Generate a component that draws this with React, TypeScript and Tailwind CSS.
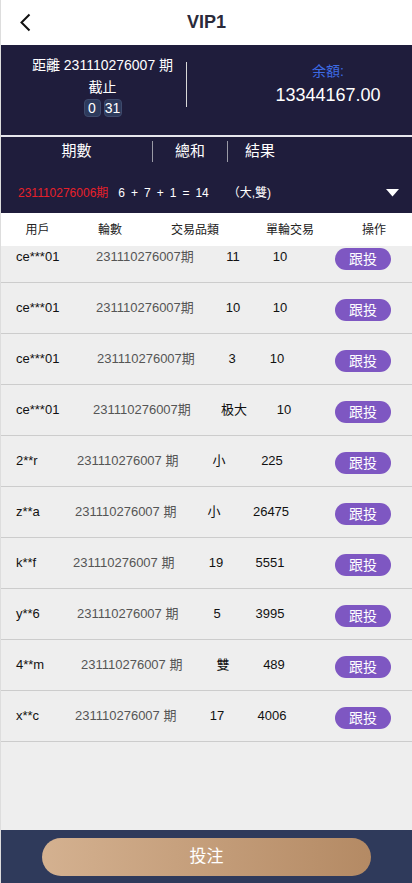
import { type FC } from "react";

type Row = {
  user: string;
  period: string;
  value: string;
  amount: string;
  p: number;
  c1: number;
  c2: number;
};

const rows: Row[] = [
  { user: "ce***01", period: "231110276007期", value: "11", amount: "10", p: 96, c1: 233, c2: 280 },
  { user: "ce***01", period: "231110276007期", value: "10", amount: "10", p: 96, c1: 233, c2: 280 },
  { user: "ce***01", period: "231110276007期", value: "3", amount: "10", p: 97, c1: 232, c2: 277 },
  { user: "ce***01", period: "231110276007期", value: "极大", amount: "10", p: 93, c1: 234, c2: 284 },
  { user: "2**r", period: "231110276007 期", value: "小", amount: "225", p: 77, c1: 219, c2: 272 },
  { user: "z**a", period: "231110276007 期", value: "小", amount: "26475", p: 75, c1: 214, c2: 271 },
  { user: "k**f", period: "231110276007 期", value: "19", amount: "5551", p: 73, c1: 216, c2: 270 },
  { user: "y**6", period: "231110276007 期", value: "5", amount: "3995", p: 77, c1: 217, c2: 270 },
  { user: "4**m", period: "231110276007 期", value: "雙", amount: "489", p: 81, c1: 223, c2: 274 },
  { user: "x**c", period: "231110276007 期", value: "17", amount: "4006", p: 75, c1: 217, c2: 272 },
];

const font = {
  fontFamily: '"Liberation Sans", "Noto Sans CJK TC", sans-serif',
};

const BetRow: FC<{ row: Row }> = ({ row }) => {
  // widths come from each row's own data
  return (
    <div className="flex h-[51px] shrink-0 items-center border-b border-[#cccccc] text-[13px] text-[#111]">
      <div className="pl-[15px]" style={{ width: row.p - 1 }}>
        {row.user}
      </div>
      <div className="text-[#555]" style={{ width: row.c1 - 20 - row.p }}>
        {row.period}
      </div>
      <div className="w-[40px] text-center">{row.value}</div>
      <div className="text-center" style={{ width: 2 * (row.c2 - (row.c1 + 20)) }}>
        {row.amount}
      </div>
      <button
        type="button"
        className="ml-auto mr-[21px] mt-[3px] h-[22px] w-[56px] rounded-full bg-[#7e57c2] text-[14px] leading-[22px] text-white"
      >
        跟投
      </button>
    </div>
  );
};

export default function App() {
  return (
    <div
      style={font}
      className="flex h-[883px] w-[412px] flex-col overflow-hidden border-l border-[#dddddd] bg-[#eeeeee]"
    >
      {/* header */}
      <div className="grid h-[45px] shrink-0 grid-cols-[1fr_auto_1fr] items-center bg-white">
        <div className="pl-[18px]">
          <svg width="12" height="19" viewBox="0 0 12 19" fill="none">
            <path d="M10.5 1.5L2.5 9.5L10.5 17.5" stroke="#111" strokeWidth="2" />
          </svg>
        </div>
        <div className="text-[18px] font-bold text-[#2a2a3a]">VIP1</div>
        <div />
      </div>

      {/* countdown / balance */}
      <div className="flex h-[90px] shrink-0 bg-[#1f1d3c] text-white">
        <div className="flex w-[185px] flex-col items-center pl-[18px] pt-[9px]">
          <div className="text-[14px] leading-[22px]">距離 231110276007 期</div>
          <div className="text-[14px] leading-[22px]">截止</div>
          <div className="mt-[1px] flex gap-[3px]">
            <span className="flex h-[18px] w-[17px] items-center justify-center rounded-[4px] border border-[#3e4a6c] bg-[#2d3a5c] text-[14px]">
              0
            </span>
            <span className="flex h-[18px] w-[18px] items-center justify-center rounded-[4px] border border-[#3e4a6c] bg-[#2d3a5c] text-[14px]">
              31
            </span>
          </div>
        </div>
        <div className="mt-[17px] h-[45px] w-px bg-[#d8d8d8]" />
        <div className="flex flex-1 flex-col items-center pl-[57px] pt-[16px]">
          <div className="text-[14px] leading-[20px] text-[#3d6be4]">余額:</div>
          <div className="mt-[2px] text-[18px] leading-[24px]">13344167.00</div>
        </div>
      </div>
      <div className="h-[2px] shrink-0 bg-[#e6e6ec]" />

      {/* last result */}
      <div className="flex h-[76px] shrink-0 flex-col bg-[#1f1d3c] pt-[4px] text-white">
        <div className="flex h-[21px] items-center text-[15px]">
          <div className="w-[151px] text-center">期數</div>
          <div className="h-[21px] w-px bg-[#9a9aa6]" />
          <div className="w-[74px] text-center">總和</div>
          <div className="h-[21px] w-px bg-[#9a9aa6]" />
          <div className="pl-[17px]">結果</div>
        </div>
        <div className="mt-[21px] flex h-[20px] items-center pl-[17px] pr-[13px] text-[12px]">
          <span className="text-[#e8202a]">231110276006期</span>
          <div className="ml-[10px] flex gap-[6px]">
            <span>6</span>
            <span>+</span>
            <span>7</span>
            <span>+</span>
            <span>1</span>
            <span>=</span>
            <span>14</span>
          </div>
          <span className="ml-[19px]">（大,雙)</span>
          <svg className="ml-auto" width="13" height="8" viewBox="0 0 13 8">
            <polygon points="0,0 13,0 6.5,7.5" fill="#fff" />
          </svg>
        </div>
      </div>

      {/* table header */}
      <div className="flex h-[33px] shrink-0 items-center bg-white text-[12px] text-[#222]">
        <div className="w-[73px] text-center">用戶</div>
        <div className="w-[72px] text-center">輪數</div>
        <div className="w-[98px] text-center">交易品類</div>
        <div className="w-[92px] text-center">單輪交易</div>
        <div className="flex-1 text-center">操作</div>
      </div>

      {/* list */}
      <div className="flex-1 overflow-hidden">
        <div className="-mt-[14px] flex flex-col">
          {rows.map((row, i) => (
            <BetRow key={i} row={row} />
          ))}
        </div>
      </div>

      {/* bottom bar */}
      <div className="h-[53px] shrink-0 bg-[#2f3a5b] px-[41px] pt-[8px]">
        <button
          type="button"
          className="h-[38px] w-full rounded-full bg-gradient-to-r from-[#d4b190] to-[#b48a64] text-[17px] text-white"
        >
          投注
        </button>
      </div>
    </div>
  );
}
